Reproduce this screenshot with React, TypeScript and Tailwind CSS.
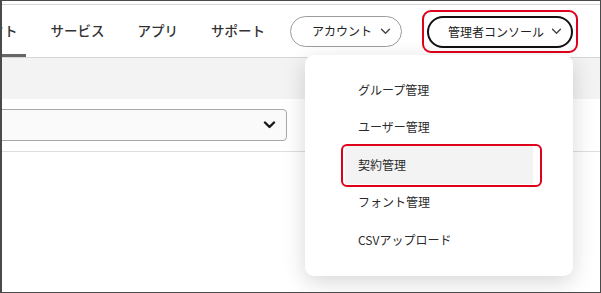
import React from "react";

function Chevron({ className, strokeWidth = 1.6 }: { className?: string; strokeWidth?: number }) {
  return (
    <svg viewBox="0 0 12 8" className={className} fill="none" stroke="currentColor" strokeWidth={strokeWidth} strokeLinecap="round" strokeLinejoin="round">
      <polyline points="1.5,1.5 6,6 10.5,1.5" />
    </svg>
  );
}

const tabs = ["プロダクト", "サービス", "アプリ", "サポート"];
const menu = ["グループ管理", "ユーザー管理", "契約管理", "フォント管理", "CSVアップロード"];

export default function App() {
  return (
    <div className="relative h-[293px] w-[601px] overflow-hidden border border-l-2 border-[#4a4a4a] bg-white font-['Noto_Sans_CJK_JP','Noto_Sans',sans-serif] text-[#2b2b2b]">
      <div className="h-[3px]" />
      <header className="flex h-[54px] items-center border-y border-[#d6d6d6]">
        <nav className="-ml-[60px] flex h-full gap-[17px]">
          {tabs.map((t, i) => (
            <div
              key={t}
              className={
                "flex h-full items-center px-2 pt-[2px] text-[13.5px] font-medium text-[#333] " +
                (i === 0 ? "border-b-[3px] border-[#666]" : "border-b-[3px] border-transparent")
              }
            >
              {t}
            </div>
          ))}
        </nav>
        <button className="ml-[17px] flex h-[31px] w-[112px] items-center rounded-full border border-[#9c9c9c] pl-[21px] text-[12px] text-[#222]">
          アカウント
          <Chevron className="ml-2 h-[7px] w-[11px] text-[#444]" />
        </button>
        <div className="ml-[20px] rounded-[9px] border-2 border-[#e0001b] px-[3px] pt-[4px] pb-[3px]">
          <button className="flex h-[32px] w-[146px] items-center rounded-full border-2 border-[#111] pl-[19px] text-[12px] text-[#222]">
            管理者コンソール
            <Chevron className="ml-[7px] h-[7px] w-[11px] text-[#444]" />
          </button>
        </div>
      </header>
      <div className="h-[41px] bg-[#f3f3f3]" />
      <div className="pt-[10px]">
        <div className="-ml-[12px] flex h-[32px] w-[297px] items-center justify-end rounded border border-[#a8a8a8] bg-[#fafafa] pr-[10px]">
          <Chevron className="h-[8px] w-[13px] text-[#1a1a1a]" strokeWidth={2.4} />
        </div>
        <div className="mt-[10px] border-b border-[#dddddd]" />
      </div>

      <div className="absolute left-[303px] top-[54px] h-[221px] w-[268px] rounded-[9px] bg-white pt-4 shadow-[0_6px_22px_rgba(0,0,0,0.16)]">
        <ul className="px-10">
          {menu.map((m) => (
            <li
              key={m}
              className={
                "relative flex h-[37.5px] items-center pl-[13px] text-[12px] " +
                (m === "契約管理" ? "bg-[#f3f3f3]" : "")
              }
            >
              {m}
              {m === "契約管理" && (
                <span className="absolute -left-[4px] -right-[9px] -top-[2px] -bottom-[3px] rounded-[6px] border-[2.5px] border-[#e0001b]" />
              )}
            </li>
          ))}
        </ul>
      </div>
    </div>
  );
}
